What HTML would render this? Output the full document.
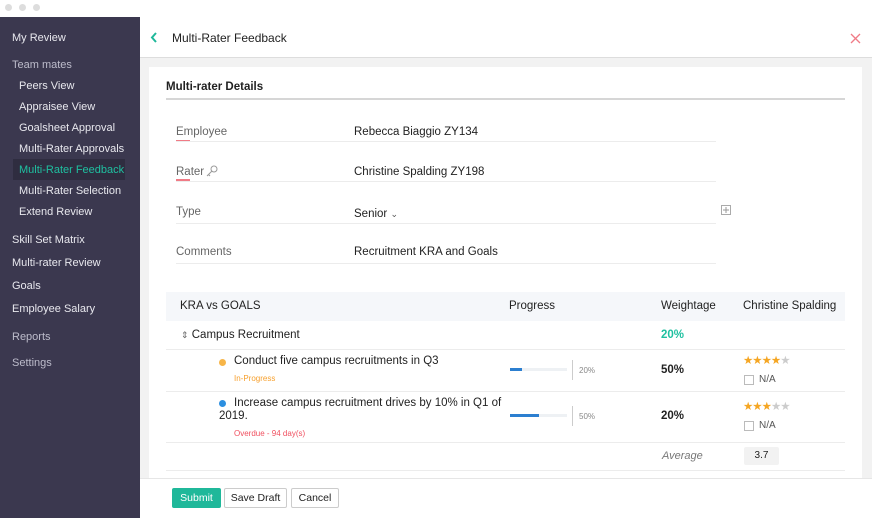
<!DOCTYPE html>
<html><head><meta charset="utf-8"><style>
*{margin:0;padding:0;box-sizing:border-box}
body{width:872px;height:518px;position:relative;overflow:hidden;background:#fff;font-family:"Liberation Sans",sans-serif;color:#222}
.a{position:absolute;white-space:nowrap}
.dot{position:absolute;top:4px;width:7px;height:7px;border-radius:50%;background:#ddd}
#sb{position:absolute;left:0;top:17px;width:140px;height:501px;background:#3b384f;color:#e8e8ee;font-size:11px}
#sb .a{left:12px}
#sb .s{left:19px}
#main{position:absolute;left:140px;top:17px;width:732px;height:501px;background:#f2f2f2}
.lbl{font-size:11.5px;color:#666}
.val{font-size:11.5px;color:#222}
.ln{position:absolute;height:1px;background:#ececec}
.red{position:absolute;width:14px;height:2px;background:#f07b86}
.st{font-size:11.5px;letter-spacing:-1px}
</style></head><body>
<div class="dot" style="left:5px"></div><div class="dot" style="left:19px"></div><div class="dot" style="left:33px"></div>
<div id="sb">
<div class="a" style="top:15px">My Review</div>
<div class="a" style="top:42px;color:#bdbccb">Team mates</div>
<div class="a s" style="top:63px">Peers View</div>
<div class="a s" style="top:84px">Appraisee View</div>
<div class="a s" style="top:105px">Goalsheet Approval</div>
<div class="a s" style="top:126px">Multi-Rater Approvals</div>
<div style="position:absolute;left:13px;top:142px;width:112px;height:21px;background:#2f2d40"></div>
<div class="a s" style="top:147px;color:#1fc0a0">Multi-Rater Feedback</div>
<div class="a s" style="top:168px">Multi-Rater Selection</div>
<div class="a s" style="top:189px">Extend Review</div>
<div class="a" style="top:217px">Skill Set Matrix</div>
<div class="a" style="top:240px">Multi-rater Review</div>
<div class="a" style="top:263px">Goals</div>
<div class="a" style="top:286px">Employee Salary</div>
<div class="a" style="top:314px;color:#bdbccb">Reports</div>
<div class="a" style="top:340px;color:#bdbccb">Settings</div>
</div>
<div id="main">
<div style="position:absolute;left:0;top:0;width:732px;height:41px;background:#fff;border-bottom:1px solid #ddd"></div>
<svg class="a" style="left:10px;top:15px" width="8" height="11"><path d="M6 1L2 5.5L6 10" stroke="#1fb89a" stroke-width="2" fill="none"/></svg>
<div class="a" style="left:32px;top:14px;font-size:12px;color:#222">Multi-Rater Feedback</div>
<svg class="a" style="left:710px;top:16px" width="11" height="11"><path d="M1 1L10 10M10 1L1 10" stroke="#f07b86" stroke-width="1.3"/></svg>
<div style="position:absolute;left:9px;top:50px;width:713px;height:420px;background:#fff"></div>
<div class="a" style="left:26px;top:64px;font-size:11.5px;font-weight:bold">Multi-rater Details</div>
<div class="ln" style="left:26px;top:81px;width:679px;height:2px;background:#d6d6d6"></div>

<div class="a lbl" style="left:36px;top:109px">Employee</div><div class="red" style="left:36px;top:123px"></div>
<div class="a val" style="left:214px;top:109px">Rebecca Biaggio ZY134</div>
<div class="ln" style="left:36px;top:124px;width:540px"></div>
<div class="a lbl" style="left:36px;top:149px">Rater</div><div class="red" style="left:36px;top:162px"></div>
<svg class="a" style="left:66px;top:148px" width="12" height="12"><circle cx="8" cy="4" r="3" stroke="#999" fill="none"/><path d="M6 6L1 11M2.5 9.5L4 11" stroke="#999" fill="none"/></svg>
<div class="a val" style="left:214px;top:149px">Christine Spalding ZY198</div>
<div class="ln" style="left:36px;top:164px;width:540px"></div>
<div class="a lbl" style="left:36px;top:189px">Type</div>
<div class="a val" style="left:214px;top:191px">Senior <span style="font-size:9px;color:#555">&#8964;</span></div>
<div class="ln" style="left:36px;top:206px;width:540px"></div>
<svg class="a" style="left:581px;top:188px" width="10" height="10"><rect x=".5" y=".5" width="9" height="9" stroke="#aaa" fill="none"/><path d="M5 2V8M2 5H8" stroke="#999"/></svg>
<div class="a lbl" style="left:36px;top:229px">Comments</div>
<div class="a val" style="left:214px;top:229px">Recruitment KRA and Goals</div>
<div class="ln" style="left:36px;top:246px;width:540px"></div>

<div style="position:absolute;left:26px;top:275px;width:679px;height:29px;background:#f5f7fa"></div>
<div class="a" style="left:40px;top:283px;font-size:11.5px">KRA vs GOALS</div>
<div class="a" style="left:369px;top:283px;font-size:11.5px">Progress</div>
<div class="a" style="left:521px;top:283px;font-size:11.5px">Weightage</div>
<div class="a" style="left:603px;top:283px;font-size:11.5px">Christine Spalding</div>
<div class="a" style="left:41px;top:312px;font-size:11.5px"><span style="font-size:9px;color:#666">&#8661;</span> Campus Recruitment</div>
<div class="a" style="left:521px;top:312px;font-size:11.5px;color:#1fc0a0;font-weight:bold">20%</div>
<div class="ln" style="left:26px;top:332px;width:679px"></div>
<div style="position:absolute;left:79px;top:342px;width:7px;height:7px;border-radius:50%;background:#f7b548"></div>
<div class="a" style="left:94px;top:338px;font-size:11.5px">Conduct five campus recruitments in Q3</div>
<div class="a" style="left:94px;top:357px;font-size:8px;color:#f7a02c">In-Progress</div>
<div style="position:absolute;left:370px;top:351px;width:57px;height:3px;background:#eef1f4"></div>
<div style="position:absolute;left:370px;top:351px;width:12px;height:3px;background:#2c7fd0"></div>
<div style="position:absolute;left:432px;top:343px;width:1px;height:20px;background:#ccc"></div>
<div class="a" style="left:439px;top:349px;font-size:8px;color:#888">20%</div>
<div class="a" style="left:521px;top:347px;font-size:11.5px;font-weight:bold">50%</div>
<div class="a st" style="left:603px;top:336px"><span style="color:#f5a623">★★★★</span><span style="color:#ccc">★</span></div>
<div style="position:absolute;left:604px;top:358px;width:10px;height:10px;border:1px solid #bbb"></div>
<div class="a" style="left:619px;top:357px;font-size:10px;color:#555">N/A</div>
<div class="ln" style="left:26px;top:374px;width:679px"></div>
<div style="position:absolute;left:79px;top:383px;width:7px;height:7px;border-radius:50%;background:#2c8fe0"></div>
<div class="a" style="left:94px;top:380px;font-size:11.5px">Increase campus recruitment drives by 10% in Q1 of</div>
<div class="a" style="left:79px;top:393px;font-size:11.5px">2019.</div>
<div class="a" style="left:94px;top:412px;font-size:8px;color:#f05060">Overdue - 94 day(s)</div>
<div style="position:absolute;left:370px;top:397px;width:57px;height:3px;background:#eef1f4"></div>
<div style="position:absolute;left:370px;top:397px;width:29px;height:3px;background:#2c7fd0"></div>
<div style="position:absolute;left:432px;top:389px;width:1px;height:20px;background:#ccc"></div>
<div class="a" style="left:439px;top:395px;font-size:8px;color:#888">50%</div>
<div class="a" style="left:521px;top:393px;font-size:11.5px;font-weight:bold">20%</div>
<div class="a st" style="left:603px;top:382px"><span style="color:#f5a623">★★★</span><span style="color:#ccc">★★</span></div>
<div style="position:absolute;left:604px;top:404px;width:10px;height:10px;border:1px solid #bbb"></div>
<div class="a" style="left:619px;top:403px;font-size:10px;color:#555">N/A</div>
<div class="ln" style="left:26px;top:425px;width:679px"></div>
<div class="a" style="left:522px;top:433px;font-size:11px;color:#777;font-style:italic">Average</div>
<div style="position:absolute;left:604px;top:430px;width:35px;height:18px;background:#f2f2f2;border-radius:2px;font-size:10px;text-align:center;line-height:18px">3.7</div>
<div class="ln" style="left:26px;top:453px;width:679px"></div>
<div style="position:absolute;left:0;top:461px;width:732px;height:40px;background:#fff;border-top:1px solid #e6e6e6"></div>
<div style="position:absolute;left:32px;top:471px;width:49px;height:20px;background:#1fb89a;color:#fff;font-size:10.5px;text-align:center;line-height:20px;border-radius:2px">Submit</div>
<div style="position:absolute;left:84px;top:471px;width:63px;height:20px;border:1px solid #ccc;font-size:10.5px;text-align:center;line-height:18px;border-radius:2px">Save Draft</div>
<div style="position:absolute;left:151px;top:471px;width:48px;height:20px;border:1px solid #ccc;font-size:10.5px;text-align:center;line-height:18px;border-radius:2px">Cancel</div>
</div>
</body></html>
